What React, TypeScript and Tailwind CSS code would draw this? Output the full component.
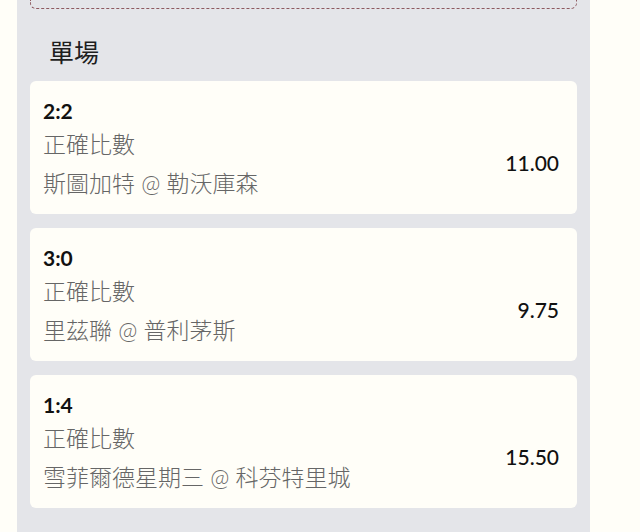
const bets = [
  { score: '2:2', market: '正確比數', match: '斯圖加特 @ 勒沃庫森', odds: '11.00' },
  { score: '3:0', market: '正確比數', match: '里茲聯 @ 普利茅斯', odds: '9.75' },
  { score: '1:4', market: '正確比數', match: '雪菲爾德星期三 @ 科芬特里城', odds: '15.50' },
]

const font = { fontFamily: 'Lato, "Noto Sans CJK TC", sans-serif' }

export default function App() {
  return (
    <div className="min-h-[532px] bg-[#fffef8]" style={font}>
      <div className="ml-[17px] w-[573px] min-h-[532px] bg-[#e4e5e9] px-[13px]">
        <div className="h-[9px] rounded-b-md border-x border-b border-dashed border-[#8e5a60]" />
        <h2 className="pl-[19px] pt-[26px] pb-[12px] text-[25px] leading-[34px] text-[#1e1e1e]">單場</h2>
        <div className="flex flex-col gap-[14px]">
          {bets.map((b) => (
            <div key={b.score} className="rounded-md bg-[#fffef8] pl-[13px] pr-[18px] pt-[16px] pb-[11px]">
              <p className="text-[21px] font-bold leading-[28px] text-[#111]">{b.score}</p>
              <div className="flex items-center justify-between">
                <div className="text-[23px] font-light text-[#666]">
                  <p className="mt-[3px] leading-[32px]">{b.market}</p>
                  <p className="mt-[3px] leading-[40px]">{b.match}</p>
                </div>
                <span className="-mt-[3px] text-[21px] font-medium text-[#111]">{b.odds}</span>
              </div>
            </div>
          ))}
        </div>
      </div>
    </div>
  )
}
